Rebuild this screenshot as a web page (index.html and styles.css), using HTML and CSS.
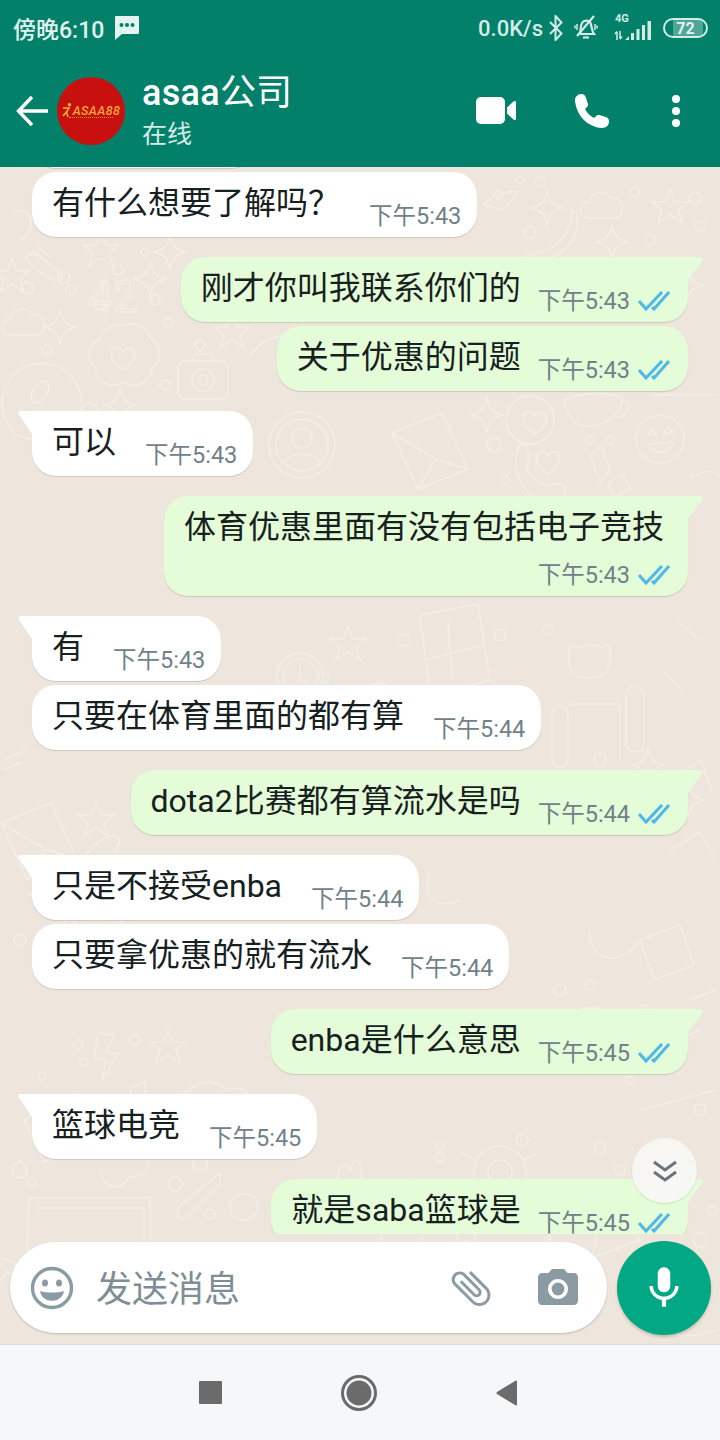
FILE: index.html
```html
<!DOCTYPE html>
<html lang="zh-CN">
  <head>
    <meta charset="UTF-8" />
    <meta name="viewport" content="width=device-width, initial-scale=1.0" />
    <title>asaa公司</title>
    <link rel="stylesheet" href="styles.css">
  </head>
  <body>
    <section class="phone">
      <header class="header">
        <div class="status">
          <div class="status__left">
            <span class="status__time">傍晚6:10</span>
            <svg class="status__msg" width="24" height="24" viewBox="0 0 24 24">
              <path fill="#e3f4ef" d="M1 0H23a1 1 0 0 1 1 1V17a1 1 0 0 1-1 1H7L0 24V1a1 1 0 0 1 1-1z" />
              <circle cx="6.5" cy="9" r="2" fill="#02806a" />
              <circle cx="12" cy="9" r="2" fill="#02806a" />
              <circle cx="17.5" cy="9" r="2" fill="#02806a" />
            </svg>
          </div>
          <div class="status__right">
            <span class="status__speed">0.0K/s</span>
            <svg width="14" height="26" viewBox="0 0 14 26" fill="none" stroke="#d5ece6" stroke-width="2">
              <path d="M1 7L12.5 18.5L6.5 25V1L12.5 7.5L1 19" />
            </svg>
            <svg class="status__bell" width="24" height="26" viewBox="0 0 24 26" fill="none" stroke="#d5ece6" stroke-width="2.2">
              <path d="M6 19C7 16 6 11 8 8C10 5 14 5 16 7C18 10 17 15 20 19Z" />
              <path d="M9 22.5H15" />
              <path d="M3 21L20 1" />
              <path d="M3 9V15M1 10.5V13.5M21 9V15M23 10.5V13.5" stroke-width="1.5" />
            </svg>
            <div class="signal">
              <span class="signal__type">4G</span>
              <svg width="38" height="20" viewBox="0 0 38 20">
                <path fill="none" stroke="#d5ece6" stroke-width="1.5" d="M3 19V11M1 13L3 10.5M6 10V18M6 18L8 15.5" />
                <path fill="#d5ece6" d="M11 19L15 15V19ZM17 12H20V19H17ZM22.5 8H25.5V19H22.5ZM28 4H31V19H28ZM33.5 0H37V19H33.5Z" />
              </svg>
            </div>
            <div class="battery"><span>72</span></div>
          </div>
        </div>
        <div class="toolbar">
          <svg class="toolbar__back" width="32" height="32" viewBox="0 0 32 32" fill="none" stroke="#fff" stroke-width="3.4">
            <path d="M32 16H3M16 2L2.5 16L16 30" />
          </svg>
          <div class="avatar">
            <div class="avatar__logo">
              <svg width="10" height="15" viewBox="0 0 10 15" fill="none" stroke="#f3b03f" stroke-width="1.6">
                <circle cx="7.5" cy="1.8" r="1" />
                <path d="M1 5H7L4.5 9L6 14M4.5 9L1 13" />
              </svg>
              <span class="avatar__name">ASAA88</span>
            </div>
            <i class="avatar__line"></i>
          </div>
          <div class="toolbar__info">
            <div class="toolbar__name">asaa<span class="toolbar__cjk">公司</span></div>
            <div class="toolbar__sub">在线</div>
          </div>
          <div class="toolbar__actions">
            <svg width="40" height="27" viewBox="0 0 40 27" fill="#fff">
              <rect width="29" height="27" rx="5" />
              <path d="M31 10.5L37.5 4.5C38.5 3.5 40 4 40 5.5V21.5C40 23 38.5 23.5 37.5 22.5L31 16.5Z" />
            </svg>
            <svg width="34" height="34" viewBox="0 0 34 34" fill="#fff">
              <path d="M6 0C9 0 10 1 11 4L13 10C13.5 12 12 13 10 15C12 19 15 22 19 24C21 22 22 20.5 24 21L31 23C33 24 34 25 34 28C34 31 31 34 27 34C12 33 1 21 0 6C0 3 3 0 6 0Z" />
            </svg>
            <svg width="16" height="32" viewBox="0 0 16 32" fill="#fff">
              <circle cx="8" cy="4" r="4" />
              <circle cx="8" cy="16" r="4" />
              <circle cx="8" cy="28" r="4" />
            </svg>
          </div>
        </div>
      </header>

      <main class="chat">
        <svg class="chat__doodles" width="720" height="1177" viewBox="0 167 720 1177" fill="none" stroke="#f3eee7" stroke-width="1.5">
          <defs>
            <path id="star" d="M0-17L5-5L18-5L8 3L12 16L0 8L-12 16L-8 3L-18-5L-5-5Z" />
            <path id="spark" d="M0-18C2-6 5-3 16 0C5 3 2 6 0 18C-2 6-5 3-16 0C-5-3-2-6 0-18Z" />
            <path id="cloud" d="M-14 13C-26 13-26-3-14-3C-13-14 3-16 8-7C20-9 24 9 13 13Z" />
            <path id="heart" d="M0 12C-18 0-12-12-4-10C-2-9-1-8 0-6C1-8 2-9 4-10C12-12 18 0 0 12Z" />
            <g id="camera">
              <rect x="-25" y="-17" width="50" height="38" rx="7" />
              <path d="M-12-17L-8-24H8L12-17" />
              <circle r="11" cy="2" />
              <circle r="5" cy="2" />
            </g>
            <g id="envelope">
              <path d="M-38-12L12-32L38 24L-12 44Z" />
              <path d="M-38-12L6 14L38 24M-12 44L6 14" />
            </g>
            <g id="person">
              <circle r="33" />
              <circle r="26" />
              <circle r="10" cy="-7" />
              <path d="M-18 18C-14 6 14 6 18 18" />
            </g>
            <g id="face">
              <circle r="24" />
              <path d="M-12 5C-6 16 8 16 14 3Z" />
              <path d="M-8-10L-3-4L-12-4ZM8-12L13-6L4-5Z" />
            </g>
          </defs>

          <!-- top left -->
          <use href="#star" x="101" y="250" />
          <use href="#spark" x="170" y="252" />
          <use href="#star" x="12" y="276" />
          <use href="#spark" x="150" y="279" />
          <use href="#spark" x="60" y="327" />
          <use href="#cloud" x="25" y="322" />
          <path d="M28 254C36 250 54 268 62 276C64 282 56 282 50 278C42 274 30 266 26 258Z" />
          <path d="M32 250L48 262M36 246L52 258" />
          <text x="88" y="312" font-family="Roboto, sans-serif" font-size="44" fill="none" stroke="#f3eee7" stroke-width="1.4">42</text>
          <path d="M123 325C135 320 148 328 150 338C162 344 162 362 152 368C152 382 134 390 124 382C110 390 94 380 96 368C84 358 90 340 100 340C102 328 114 324 123 325Z" />
          <use href="#heart" x="123" y="358" />
          <use href="#camera" x="203" y="378" />
          <path d="M12 430A40 40 0 1 1 78 420C70 440 20 446 12 430Z" />
          <ellipse cx="40" cy="392" rx="7" ry="12" transform="rotate(35 40 392)" />
          <use href="#spark" x="120" y="405" />
          <use href="#person" x="302" y="445" />
          <use href="#star" x="232" y="332" />
          <path d="M250 356C260 340 290 326 310 340" />
          <path d="M178 204L208 192M186 214L214 200" />
          <path d="M12 215C30 200 40 230 20 240" />

          <!-- top right -->
          <use href="#cloud" x="603" y="205" />
          <use href="#star" x="670" y="207" />
          <use href="#spark" x="547" y="208" />
          <use href="#spark" x="612" y="242" />
          <path d="M527 255C560 252 572 230 572 210L576 212C584 232 566 262 527 262Z" />
          <path d="M484 205C492 194 510 190 518 192L504 210Z" />
          <use href="#spark" x="687" y="285" />
          <use href="#envelope" x="430" y="445" />
          <use href="#spark" x="487" y="415" />
          <circle cx="530" cy="420" r="24" />
          <use href="#heart" x="535" y="422" />
          <path d="M565 400C580 392 610 392 622 398C622 416 600 428 586 426C574 426 566 414 565 400Z" />
          <path d="M622 402C634 398 630 416 616 418" />
          <use href="#face" x="660" y="439" />
          <path d="M520 445C530 440 530 460 526 468C534 482 546 488 554 484C566 480 572 498 556 504C528 506 506 470 520 445Z" />
          <use href="#heart" x="548" y="462" />
          <path d="M590 455L602 447L610 470L600 482ZM608 484L622 474L630 488L614 498Z" />
          <path d="M650 395H716" />
          <path d="M690 478C710 466 722 472 722 484" />

          <!-- middle -->
          <use href="#star" x="348" y="644" />
          <circle cx="300" cy="676" r="23" />
          <circle cx="300" cy="676" r="17" />
          <path d="M300 664V678L308 684" />
          <path d="M420 615L478 604L490 680L430 696Z" />
          <path d="M425 660L484 645M448 622L452 680" />
          <use href="#cloud" x="382" y="696" />
          <path d="M570 668C566 650 572 640 578 648C584 644 596 644 602 648C608 638 614 650 608 668C606 680 572 682 570 668Z" />
          <rect x="552" y="706" width="16" height="62" rx="8" />
          <path d="M570 704H620V760" />
          <rect x="626" y="686" width="18" height="66" rx="9" />
          <path d="M664 672L682 690M676 620L700 640" />
          <use href="#spark" x="648" y="765" />
          <path d="M672 780L700 760L712 790" />
          <use href="#spark" x="688" y="800" />
          <use href="#star" x="96" y="820" />
          <use href="#envelope" x="39" y="835" />
          <path d="M82 860C96 840 112 830 120 840C112 866 96 880 84 884Z" />
          <use href="#spark" x="46" y="894" />
          <path d="M4 760L26 750M2 770L22 762" />
          <path d="M96 930V960M120 920C134 940 130 960 116 966" />
          <path d="M430 870C420 900 440 910 460 900" />
          <path d="M590 930C586 960 620 970 640 940" />
          <path d="M640 940L680 925L694 965L654 980Z" />
          <path d="M670 850L700 832L716 860" />

          <!-- lower -->
          <use href="#star" x="168" y="1047" />
          <path d="M98 1032L114 1036L106 1052L118 1054L102 1080L106 1060L94 1058Z" />
          <path d="M130 1100L132 1086L146 1082L144 1098M130 1100A5 4 0 1 1 128 1108M144 1098A5 4 0 1 1 142 1106" />
          <path d="M24 1120L72 1094L90 1136L44 1162Z" />
          <path d="M46 1126L70 1114M50 1136L74 1124" />
          <use href="#heart" x="230" y="1124" />
          <path d="M170 1130C170 1090 210 1070 226 1090C250 1080 262 1110 248 1130C248 1150 206 1160 170 1130Z" />
          <use href="#camera" x="590" y="1032" />
          <circle cx="500" cy="1172" r="26" />
          <circle cx="500" cy="1172" r="12" />
          <path d="M476 1160L462 1154M524 1160L538 1152M484 1194L476 1208M518 1192L528 1206" />
          <use href="#star" x="466" y="1232" />
          <use href="#spark" x="415" y="1195" />
          <path d="M336 1192C336 1170 344 1156 350 1170C356 1150 364 1160 360 1190C350 1210 340 1206 336 1192Z" />
          <path d="M380 1246C380 1214 420 1214 424 1246Z" />
          <circle cx="572" cy="1240" r="24" />
          <path d="M562 1250C570 1262 580 1260 584 1248Z" />
          <path d="M540 1200L610 1180L640 1240L560 1270Z" />
          <path d="M640 1110L716 1090" />
          <path d="M650 1050L700 1030M690 1000L716 990" />
          <path d="M180 1206L216 1176L220 1174L220 1184L186 1218C180 1222 174 1214 180 1206Z" />
          <path d="M234 1198C240 1192 256 1192 258 1204C258 1220 238 1226 232 1214C228 1206 230 1202 234 1198Z" />
          <path d="M30 1198H150V1250H26Z" />
          <path d="M36 1208H144V1250" />
          <path d="M20 1162C10 1166 10 1176 20 1178C30 1176 28 1166 20 1160Z" />
          <path d="M100 1170C104 1190 120 1192 130 1176C146 1180 156 1160 140 1158" />
          <path d="M0 1258L14 1262L18 1276L6 1272L0 1282" />
          <path d="M640 1325C660 1336 690 1340 716 1330" />

          <!-- small dots -->
          <g>
            <circle cx="64" cy="278" r="6" /><circle cx="118" cy="270" r="5" /><circle cx="71" cy="290" r="5" /><circle cx="100" cy="305" r="5" />
            <circle cx="145" cy="252" r="4" /><circle cx="168" cy="322" r="5" /><circle cx="47" cy="350" r="5" /><circle cx="90" cy="410" r="7" />
            <circle cx="27" cy="288" r="6" /><circle cx="155" cy="300" r="5" /><circle cx="200" cy="345" r="5" /><circle cx="165" cy="385" r="5" />
            <circle cx="498" cy="195" r="4" /><circle cx="520" cy="180" r="4" /><circle cx="540" cy="182" r="5" /><circle cx="635" cy="192" r="5" />
            <circle cx="650" cy="240" r="5" /><circle cx="530" cy="232" r="6" /><circle cx="695" cy="198" r="6" /><circle cx="700" cy="226" r="5" />
            <circle cx="494" cy="445" r="7" /><circle cx="590" cy="440" r="4" /><circle cx="610" cy="440" r="4" /><circle cx="505" cy="480" r="4" />
            <circle cx="324" cy="678" r="5" /><circle cx="404" cy="640" r="6" /><circle cx="500" cy="635" r="6" /><circle cx="548" cy="630" r="5" />
            <circle cx="70" cy="925" r="6" /><circle cx="20" cy="940" r="6" /><circle cx="130" cy="888" r="5" /><circle cx="600" cy="760" r="6" />
            <circle cx="620" cy="800" r="5" /><circle cx="660" cy="790" r="5" /><circle cx="560" cy="990" r="6" /><circle cx="590" cy="985" r="5" />
            <circle cx="78" cy="1045" r="5" /><circle cx="84" cy="1062" r="4" /><circle cx="42" cy="1076" r="4" /><circle cx="135" cy="1040" r="5" />
            <circle cx="520" cy="1020" r="5" /><circle cx="538" cy="1040" r="4" /><circle cx="630" cy="1080" r="4" /><circle cx="645" cy="1010" r="5" />
            <circle cx="200" cy="1164" r="7" /><circle cx="175" cy="1184" r="7" /><circle cx="210" cy="1214" r="5" /><circle cx="32" cy="1182" r="4" />
            <circle cx="440" cy="1158" r="5" /><circle cx="440" cy="1145" r="4" /><circle cx="522" cy="1140" r="6" /><circle cx="600" cy="1148" r="6" />
            <circle cx="620" cy="1170" r="5" /><circle cx="700" cy="1110" r="6" /><circle cx="700" cy="1240" r="7" /><circle cx="712" cy="1210" r="5" />
          </g>
        </svg>

        <div class="messages">
          <div class="bubble bubble--in bubble--cut"></div>
          <div class="bubble bubble--in">
            <span class="bubble__text">有什么想要了解吗&#xFF1F;</span>
            <span class="bubble__meta"><span class="bubble__time">下午5:43</span></span>
          </div>

          <div class="bubble bubble--out bubble--tail bubble--first">
            <span class="bubble__text">刚才你叫我联系你们的</span>
            <span class="bubble__meta"><span class="bubble__time">下午5:43</span><svg class="ticks" width="32" height="20" viewBox="0 0 32 20"><path d="M1 10L8 18L24 1M14 16L16 18L31 1" /></svg></span>
          </div>
          <div class="bubble bubble--out">
            <span class="bubble__text">关于优惠的问题</span>
            <span class="bubble__meta"><span class="bubble__time">下午5:43</span><svg class="ticks" width="32" height="20" viewBox="0 0 32 20"><path d="M1 10L8 18L24 1M14 16L16 18L31 1" /></svg></span>
          </div>

          <div class="bubble bubble--in bubble--tail bubble--first">
            <span class="bubble__text">可以</span>
            <span class="bubble__meta"><span class="bubble__time">下午5:43</span></span>
          </div>

          <div class="bubble bubble--out bubble--tail bubble--first bubble--stack">
            <span class="bubble__text">体育优惠里面有没有包括电子竞技</span>
            <span class="bubble__meta"><span class="bubble__time">下午5:43</span><svg class="ticks" width="32" height="20" viewBox="0 0 32 20"><path d="M1 10L8 18L24 1M14 16L16 18L31 1" /></svg></span>
          </div>

          <div class="bubble bubble--in bubble--tail bubble--first">
            <span class="bubble__text">有</span>
            <span class="bubble__meta"><span class="bubble__time">下午5:43</span></span>
          </div>
          <div class="bubble bubble--in">
            <span class="bubble__text">只要在体育里面的都有算</span>
            <span class="bubble__meta"><span class="bubble__time">下午5:44</span></span>
          </div>

          <div class="bubble bubble--out bubble--tail bubble--first">
            <span class="bubble__text">dota2比赛都有算流水是吗</span>
            <span class="bubble__meta"><span class="bubble__time">下午5:44</span><svg class="ticks" width="32" height="20" viewBox="0 0 32 20"><path d="M1 10L8 18L24 1M14 16L16 18L31 1" /></svg></span>
          </div>

          <div class="bubble bubble--in bubble--tail bubble--first">
            <span class="bubble__text">只是不接受enba</span>
            <span class="bubble__meta"><span class="bubble__time">下午5:44</span></span>
          </div>
          <div class="bubble bubble--in">
            <span class="bubble__text">只要拿优惠的就有流水</span>
            <span class="bubble__meta"><span class="bubble__time">下午5:44</span></span>
          </div>

          <div class="bubble bubble--out bubble--tail bubble--first">
            <span class="bubble__text">enba是什么意思</span>
            <span class="bubble__meta"><span class="bubble__time">下午5:45</span><svg class="ticks" width="32" height="20" viewBox="0 0 32 20"><path d="M1 10L8 18L24 1M14 16L16 18L31 1" /></svg></span>
          </div>

          <div class="bubble bubble--in bubble--tail bubble--first">
            <span class="bubble__text">篮球电竞</span>
            <span class="bubble__meta"><span class="bubble__time">下午5:45</span></span>
          </div>

          <div class="bubble bubble--out bubble--tail bubble--first">
            <span class="bubble__text">就是saba篮球是</span>
            <span class="bubble__meta"><span class="bubble__time">下午5:45</span><svg class="ticks" width="32" height="20" viewBox="0 0 32 20"><path d="M1 10L8 18L24 1M14 16L16 18L31 1" /></svg></span>
          </div>
        </div>

        <button class="chat__down" type="button">
          <svg width="26" height="22" viewBox="0 0 26 22" fill="none" stroke="#66757f" stroke-width="3">
            <path d="M2 2L13 10L24 2M2 12L13 20L24 12" />
          </svg>
        </button>

        <div class="composer">
          <div class="composer__box">
            <svg class="composer__emoji" width="44" height="44" viewBox="0 0 44 44">
              <circle cx="22" cy="22" r="19.5" fill="none" stroke="#8b9ba4" stroke-width="3.4" />
              <ellipse cx="15" cy="17" rx="3" ry="3.6" fill="#8b9ba4" />
              <ellipse cx="29" cy="17" rx="3" ry="3.6" fill="#8b9ba4" />
              <path d="M10 25C16 27 28 27 34 25C32 38 12 38 10 25Z" fill="#8b9ba4" />
            </svg>
            <span class="composer__hint">发送消息</span>
            <svg class="composer__clip" width="48" height="48" viewBox="0 0 24 24" fill="#8b9ba4">
              <path transform="rotate(-45 12 12)" d="M16.5 6v11.5c0 2.21-1.79 4-4 4s-4-1.79-4-4V5c0-1.38 1.12-2.5 2.5-2.5s2.5 1.12 2.5 2.5v10.5c0 .55-.45 1-1 1s-1-.45-1-1V6H10v9.5c0 1.38 1.12 2.5 2.5 2.5s2.5-1.12 2.5-2.5V5c0-2.21-1.79-4-4-4S7 2.79 7 5v12.5c0 3.04 2.46 5.5 5.5 5.5s5.5-2.46 5.5-5.5V6h-1.5z" />
            </svg>
            <svg class="composer__cam" width="48" height="48" viewBox="0 0 24 24" fill="#8b9ba4">
              <path d="M9 2.5L7.2 4.5H4c-1.1 0-2 .9-2 2v12c0 1.1.9 2 2 2h16c1.1 0 2-.9 2-2v-12c0-1.1-.9-2-2-2h-3.2L15 2.5H9zm3 15c-2.76 0-5-2.24-5-5s2.24-5 5-5 5 2.24 5 5-2.24 5-5 5z" />
              <circle cx="12" cy="12.5" r="3.2" />
            </svg>
          </div>
          <button class="composer__mic" type="button">
            <svg width="50" height="50" viewBox="0 0 24 24" fill="#fff">
              <path d="M12 14c1.66 0 3-1.34 3-3V5c0-1.66-1.34-3-3-3S9 3.34 9 5v6c0 1.66 1.34 3 3 3zm5.3-3c0 3-2.54 5.1-5.3 5.1S6.7 14 6.7 11H5c0 3.41 2.72 6.23 6 6.72V21h2v-3.28c3.28-.48 6-3.3 6-6.72h-1.7z" />
            </svg>
          </button>
        </div>
      </main>

      <nav class="nav">
        <i class="nav__square"></i>
        <svg width="36" height="36" viewBox="0 0 36 36">
          <circle cx="18" cy="18" r="16.5" fill="none" stroke="#6b6b6b" stroke-width="3" />
          <circle cx="18" cy="18" r="12.5" fill="#6b6b6b" />
        </svg>
        <svg width="22" height="26" viewBox="0 0 22 26">
          <path d="M21 1.5V24.5C21 25.5 20.4 25.8 19.5 25.3L1 14C0.3 13.5 0.3 12.5 1 12L19.5 0.7C20.4 0.2 21 0.5 21 1.5Z" fill="#6b6b6b" />
        </svg>
      </nav>
    </section>
  </body>
</html>
```

FILE: styles.css
```css
* {
  margin: 0;
  padding: 0;
  box-sizing: border-box;
}
html {
  font-family: Roboto, "Noto Sans CJK SC", sans-serif;
}
body {
  width: 720px;
  height: 1440px;
  overflow: hidden;
}
.phone {
  display: flex;
  flex-direction: column;
  height: 1440px;
}

/* header */
.header {
  height: 167px;
  background-color: #02806a;
  color: white;
}
.status {
  display: flex;
  justify-content: space-between;
  align-items: center;
  height: 54px;
  padding: 2px 12px 0 13px;
  color: #e3f4ef;
}
.status__left,
.status__right {
  display: flex;
  align-items: center;
}
.status__time {
  font-size: 23px;
  font-weight: 500;
}
.status__msg {
  margin-left: 11px;
}
.status__speed {
  font-size: 22px;
  font-weight: 500;
  color: #d5ece6;
}
.status__right > svg {
  margin-left: 6px;
}
.status__right > .status__bell {
  margin-left: 11px;
}
.signal {
  position: relative;
  margin-left: 16px;
  padding-top: 6px;
  width: 38px;
}
.signal svg {
  display: block;
}
.signal__type {
  position: absolute;
  top: -3px;
  left: 1px;
  font-size: 11px;
  font-weight: 700;
  color: #d5ece6;
}
.battery {
  display: flex;
  align-items: center;
  justify-content: center;
  margin-left: 11px;
  width: 45px;
  height: 20px;
  border: 2px solid #d5ece6;
  border-radius: 10px;
  background-image: linear-gradient(to right, transparent 20%, rgba(255, 255, 255, 0.3) 20%, rgba(255, 255, 255, 0.3) 92%, transparent 92%);
  font-size: 16px;
  font-weight: 700;
  color: #e3f4ef;
}
.toolbar {
  display: flex;
  align-items: center;
  height: 113px;
  padding: 0 36px 0 16px;
}
.toolbar__back {
  flex: none;
}
.avatar {
  display: flex;
  flex-direction: column;
  align-items: center;
  justify-content: center;
  flex: none;
  width: 68px;
  height: 68px;
  margin-left: 9px;
  border-radius: 50%;
  background-color: #c8100f;
}
.avatar__logo {
  display: flex;
  align-items: center;
  gap: 1px;
}
.avatar__name {
  font-size: 12.5px;
  font-weight: 500;
  font-style: italic;
  letter-spacing: 0.4px;
  color: #f0a63c;
}
.avatar__line {
  display: block;
  width: 44px;
  margin-top: -1px;
  border-bottom: 1px dotted #e8914a;
}
.toolbar__info {
  flex: 1;
  margin-left: 17px;
  padding-top: 3px;
}
.toolbar__name {
  font-size: 36px;
  line-height: 44px;
  font-weight: 500;
  letter-spacing: 0.3px;
}
.toolbar__cjk {
  font-weight: 400;
  letter-spacing: 0;
}
.toolbar__sub {
  margin-top: 2px;
  font-size: 25px;
  line-height: 36px;
  color: #d5ece6;
}
.toolbar__actions {
  display: flex;
  align-items: center;
  gap: 59px;
}

/* chat */
.chat {
  position: relative;
  display: flex;
  flex-direction: column;
  flex: 1;
  overflow: hidden;
  background-color: #eee6dd;
}
.chat__doodles {
  position: absolute;
  top: 0;
  left: 0;
}
.messages {
  position: relative;
  display: flex;
  flex-direction: column;
  gap: 4px;
  height: 1067px;
  padding: 0 32px;
  overflow: hidden;
}
.bubble {
  position: relative;
  display: flex;
  flex: none;
  padding: 11px 16px 7px 20px;
  border-radius: 24px;
  box-shadow: 0 1px 1px rgba(0, 0, 0, 0.14);
}
.bubble--in {
  align-self: flex-start;
  background-color: #fff;
}
.bubble--out {
  align-self: flex-end;
  padding-right: 18px;
  background-color: #e5fcd8;
}
.bubble--first {
  margin-top: 16px;
}
.bubble--cut {
  width: 223px;
  height: 65px;
  margin-top: -64px;
}
.bubble--stack {
  flex-direction: column;
}
.bubble--tail.bubble--in {
  border-top-left-radius: 0;
}
.bubble--tail.bubble--out {
  border-top-right-radius: 0;
}
.bubble--tail::before {
  content: "";
  position: absolute;
  top: 0;
  width: 26px;
  height: 23px;
}
.bubble--in.bubble--tail::before {
  left: -14px;
  background-color: #fff;
  clip-path: polygon(100% 0, 8% 0, 0 10%, 54% 100%, 100% 100%);
}
.bubble--out.bubble--tail::before {
  right: -15px;
  background-color: #e5fcd8;
  clip-path: polygon(0 0, 92% 0, 100% 12%, 42% 100%, 0 100%);
}
.bubble__text {
  margin-bottom: 7px;
  font-size: 32px;
  line-height: 40px;
  white-space: nowrap;
  color: #16211f;
}
.bubble__meta {
  display: flex;
  align-items: center;
  align-self: flex-end;
  gap: 8px;
  margin-left: 29px;
  height: 28px;
}
.bubble--out .bubble__meta {
  margin-left: 17px;
}
.bubble--stack .bubble__text {
  margin-right: 6px;
  margin-bottom: 14px;
}
.bubble__time {
  font-size: 23.5px;
  line-height: 28px;
  white-space: nowrap;
  color: #70818a;
}
.ticks {
  fill: none;
  stroke: #4fb8e8;
  stroke-width: 3;
}
.chat__down {
  position: absolute;
  top: 971px;
  right: 23px;
  display: flex;
  align-items: center;
  justify-content: center;
  width: 65px;
  height: 65px;
  border: none;
  border-radius: 50%;
  background-color: rgba(248, 247, 244, 0.96);
  box-shadow: 0 1px 2px rgba(0, 0, 0, 0.12);
}

/* input row */
.composer {
  position: relative;
  display: flex;
  align-items: center;
  gap: 10px;
  height: 110px;
  padding: 0 9px 3px 10px;
}
.composer__box {
  display: flex;
  align-items: center;
  flex: 1;
  height: 91px;
  padding: 0 25px 0 20px;
  border-radius: 46px;
  background-color: #fff;
  box-shadow: 0 1px 2px rgba(0, 0, 0, 0.2);
}
.composer__hint {
  flex: 1;
  margin-left: 22px;
  padding-bottom: 4px;
  font-size: 36px;
  color: #7f8e96;
}
.composer__cam {
  margin-left: 39px;
}
.composer__mic {
  display: flex;
  align-items: center;
  justify-content: center;
  flex: none;
  width: 94px;
  height: 94px;
  border: none;
  border-radius: 50%;
  background-color: #02a884;
  box-shadow: 0 2px 3px rgba(0, 0, 0, 0.18);
}

/* android nav */
.nav {
  display: flex;
  align-items: center;
  justify-content: center;
  gap: 119px;
  flex: none;
  height: 96px;
  padding-right: 4px;
  border-top: 1px solid #dcdde0;
  background-color: #f6f7f9;
}
.nav__square {
  display: block;
  width: 23px;
  height: 23px;
  border-radius: 1px;
  background-color: #6b6b6b;
}
```
